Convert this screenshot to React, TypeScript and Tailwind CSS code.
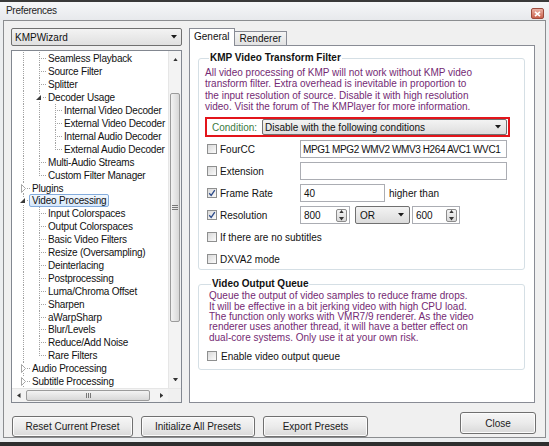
import React from "react";

const tree: { t: string; c: string; sel?: boolean }[] = [
  { t: "Seamless Playback", c: "IT" },
  { t: "Source Filter", c: "IT" },
  { t: "Splitter", c: "IT" },
  { t: "Decoder Usage", c: "IE" },
  { t: "Internal Video Decoder", c: "IIT" },
  { t: "External Video Decoder", c: "IIT" },
  { t: "Internal Audio Decoder", c: "IIT" },
  { t: "External Audio Decoder", c: "IIL" },
  { t: "Multi-Audio Streams", c: "IT" },
  { t: "Custom Filter Manager", c: "IL" },
  { t: "Plugins", c: "C" },
  { t: "Video Processing", c: "E", sel: true },
  { t: "Input Colorspaces", c: "IT" },
  { t: "Output Colorspaces", c: "IT" },
  { t: "Basic Video Filters", c: "IT" },
  { t: "Resize (Oversampling)", c: "IT" },
  { t: "Deinterlacing", c: "IT" },
  { t: "Postprocessing", c: "IT" },
  { t: "Luma/Chroma Offset", c: "IT" },
  { t: "Sharpen", c: "IT" },
  { t: "aWarpSharp", c: "IT" },
  { t: "Blur/Levels", c: "IT" },
  { t: "Reduce/Add Noise", c: "IT" },
  { t: "Rare Filters", c: "IL" },
  { t: "Audio Processing", c: "C" },
  { t: "Subtitle Processing", c: "C" },
];

const dot = { stroke: "#a3a3a3", strokeWidth: 1, strokeDasharray: "1 1" };

function Cell({ k }: { k: string }) {
  return (
    <svg width="16" height="13" viewBox="0 0 16 13" className="shrink-0">
      {k === "I" && <line x1="8.5" y1="0" x2="8.5" y2="13" {...dot} />}
      {k === "T" && (
        <>
          <line x1="8.5" y1="0" x2="8.5" y2="13" {...dot} />
          <line x1="10" y1="6.5" x2="16" y2="6.5" {...dot} />
        </>
      )}
      {k === "L" && (
        <>
          <line x1="8.5" y1="0" x2="8.5" y2="7" {...dot} />
          <line x1="10" y1="6.5" x2="16" y2="6.5" {...dot} />
        </>
      )}
      {k === "E" && (
        <>
          <line x1="8.5" y1="0" x2="8.5" y2="3" {...dot} />
          <line x1="8.5" y1="11" x2="8.5" y2="13" {...dot} />
          <polygon points="10,4 10,9 5,9" fill="#3a3a3a" />
          <line x1="12" y1="6.5" x2="16" y2="6.5" {...dot} />
        </>
      )}
      {k === "C" && (
        <>
          <line x1="8.5" y1="0" x2="8.5" y2="2" {...dot} />
          <line x1="8.5" y1="11" x2="8.5" y2="13" {...dot} />
          <polygon points="6.5,2.5 10.5,6.5 6.5,10.5" fill="#fff" stroke="#a6a6a6" strokeWidth="1" />
          <line x1="12" y1="6.5" x2="16" y2="6.5" {...dot} />
        </>
      )}
    </svg>
  );
}

function Tri({ dir, size = 7, color = "#1a1a1a" }: { dir: "up" | "down" | "left" | "right"; size?: number; color?: string }) {
  const h = Math.ceil(size / 2) + 0.5;
  const pts =
    dir === "down"
      ? `0,0 ${size},0 ${size / 2},${h}`
      : dir === "up"
      ? `0,${h} ${size},${h} ${size / 2},0`
      : dir === "left"
      ? `${h},0 ${h},${size} 0,${size / 2}`
      : `0,0 0,${size} ${h},${size / 2}`;
  const w = dir === "up" || dir === "down" ? size : h;
  const hh = dir === "up" || dir === "down" ? h : size;
  return (
    <svg width={w} height={hh} viewBox={`0 0 ${w} ${hh}`} className="shrink-0">
      <polygon points={pts} fill={color} />
    </svg>
  );
}

function Check({ on }: { on?: boolean }) {
  return (
    <span className="w-[10px] h-[10px] shrink-0 border border-[#8e8f8f] bg-gradient-to-br from-[#d9d9d9] to-[#fbfbfb] flex items-center justify-center">
      {on && (
        <svg width="8" height="8" viewBox="0 0 8 8">
          <path d="M1.2 4.2 L3.2 6.4 L6.8 1.2" fill="none" stroke="#2c4a8a" strokeWidth="1.3" />
        </svg>
      )}
    </span>
  );
}

function Spin() {
  return (
    <span className="w-[11px] h-[13px] shrink-0 border border-[#8c8c8c] rounded-[2px] bg-gradient-to-b from-[#f4f4f4] to-[#d8d8d8] flex flex-col items-center justify-center gap-[2px]">
      <Tri dir="up" size={5} color="#333" />
      <span className="w-[7px] h-px bg-[#8c8c8c]" />
      <Tri dir="down" size={5} color="#333" />
    </span>
  );
}

function Btn({ w, children, extra = "" }: { w: string; children: React.ReactNode; extra?: string }) {
  return (
    <div
      className={`${w} ${extra} h-[21px] border border-[#707070] rounded-[3px] bg-gradient-to-b from-[#f6f6f6] via-[#ebebeb] to-[#d9d9d9] flex items-center justify-center text-[10px] text-[#1a1a1a] shadow-[inset_0_0_0_1px_#fcfcfc]`}
    >
      {children}
    </div>
  );
}

export default function App() {
  return (
    <div className="w-[549px] h-[446px] overflow-hidden bg-[#eceef0] border-t-2 border-[#3a3a3a] flex flex-col font-['Liberation_Sans',Arial,sans-serif] text-[10px] text-[#111]">
      {/* title bar */}
      <div className="h-[18px] shrink-0 flex items-start justify-between pl-[6px] pr-[5px] bg-gradient-to-b from-[#f6f7f9] to-[#e7e9ec]">
        <span className="text-[10px] leading-[18px] tracking-[-0.3px] text-[#1e1e1e]">Preferences</span>
        <span className="mt-[6px] w-[13px] h-[11px] rounded-[2px] border border-[#9c4a3c] bg-gradient-to-b from-[#eab2a6] to-[#c9604c] flex items-center justify-center">
          <svg width="7" height="6" viewBox="0 0 7 6">
            <path d="M1 0.8 L6 5.2 M6 0.8 L1 5.2" stroke="#fff" strokeWidth="1.6" />
          </svg>
        </span>
      </div>

      {/* frame */}
      <div className="mx-[3px] h-[418px] shrink-0 border border-[#8b8d90] bg-[#f0f0f0] flex flex-col pl-[7px] pr-[9px] pt-[7px]">
        <div className="flex h-[375px]">
          {/* left column */}
          <div className="w-[171px] flex flex-col gap-[4px]">
            <div className="h-[18px] border border-[#707070] rounded-[2px] bg-gradient-to-b from-[#f3f3f3] to-[#e0e0e0] flex items-center justify-between pl-[3px] pr-[4px]">
              <span>KMPWizard</span>
              <Tri dir="down" size={6} />
            </div>
            <div className="h-[353px] border border-[#828790] bg-white flex flex-col">
              <div className="flex h-[337px]">
                <div className="flex-1 overflow-hidden pt-[1.5px] pl-[3px] tracking-[-0.2px]">
                  {tree.map((r, i) => (
                    <div key={i} className="h-[12.92px] flex items-center whitespace-nowrap">
                      {r.c.split("").map((k, j) => (
                        <Cell key={j} k={k} />
                      ))}
                      {r.sel ? (
                        <span className="ml-[-2px] px-[2px] h-[13px] leading-[11px] border border-[#84acdd] rounded-[2px] bg-gradient-to-b from-[#f2f8fe] to-[#d5e7fb]">
                          {r.t}
                        </span>
                      ) : (
                        <span className="ml-[1px]">{r.t}</span>
                      )}
                    </div>
                  ))}
                </div>
                {/* vertical scrollbar */}
                <div className="w-[13px] bg-[#f3f3f3] border-l border-[#e6e6e6] flex flex-col">
                  <div className="h-[17px] flex items-center justify-center">
                    <Tri dir="up" size={5} color="#333" />
                  </div>
                  <div className="flex-1 pt-[25px]">
                    <div className="h-[229px] mx-px border border-[#9b9b9b] rounded-[2px] bg-gradient-to-r from-[#f3f3f3] to-[#d8d8d8] flex flex-col items-center justify-center gap-[1px]">
                      <span className="w-[6px] h-px bg-[#777]" />
                      <span className="w-[6px] h-px bg-[#777]" />
                      <span className="w-[6px] h-px bg-[#777]" />
                    </div>
                  </div>
                  <div className="h-[17px] flex items-center justify-center">
                    <Tri dir="down" size={5} color="#333" />
                  </div>
                </div>
              </div>
              {/* horizontal scrollbar */}
              <div className="h-[14px] flex bg-[#f3f3f3] border-t border-[#e6e6e6]">
                <div className="w-[14px] flex items-center justify-center">
                  <Tri dir="left" size={5} color="#333" />
                </div>
                <div className="w-[124px] my-px border border-[#9b9b9b] rounded-[2px] bg-gradient-to-b from-[#f3f3f3] to-[#d8d8d8] flex items-center justify-center gap-[1px]">
                  <span className="w-px h-[5px] bg-[#777]" />
                  <span className="w-px h-[5px] bg-[#777]" />
                  <span className="w-px h-[5px] bg-[#777]" />
                </div>
                <div className="flex-1 flex items-center justify-end pr-[5px]">
                  <Tri dir="right" size={5} color="#333" />
                </div>
                <div className="w-[13px] bg-[#f0f0f0]" />
              </div>
            </div>
          </div>

          {/* right column */}
          <div className="ml-[7px] w-[346px] flex flex-col">
            <div className="h-[17px] flex items-end">
              <div className="relative z-10 -mb-px h-[18px] border border-b-0 border-[#898c95] bg-white px-[4px] leading-[16px]">
                General
              </div>
              <div className="ml-[-1px] h-[14px] border border-b-0 border-[#898c95] bg-gradient-to-b from-[#f4f4f4] to-[#e2e2e2] px-[5px] leading-[13px]">
                Renderer
              </div>
            </div>
            <div className="h-[358px] border border-[#898c95] bg-white pl-[8px] pt-[6px]">
              {/* group 1 */}
              <fieldset className="w-[327px] border border-[#d5dfe5] rounded-[3px] pl-[6px] pb-[1px]">
                <legend className="ml-[4px] px-[1px] font-bold leading-[12px] text-[#111]">KMP Video Transform Filter</legend>
                <div className="mt-[3px] leading-[11.3px] text-[#742a73] whitespace-nowrap">
                  <div>All video processing of KMP will not work without KMP video</div>
                  <div>transform filter. Extra overhead is inevitable in proportion to</div>
                  <div>the input resolution of source. Disable it with high resolution</div>
                  <div>video. Visit the forum of The KMPlayer for more information.</div>
                </div>
                <div className="mt-[5px] w-[305px] h-[20px] border-2 border-[#e3151b] flex items-center pl-[5px] pr-[1px]">
                  <span className="w-[50px] text-[#3b7a40]">Condition:</span>
                  <div className="flex-1 h-[16px] border border-[#707070] rounded-[2px] bg-gradient-to-b from-[#f3f3f3] to-[#dedede] flex items-center justify-between pl-[2px] pr-[5px]">
                    <span>Disable with the following conditions</span>
                    <Tri dir="down" size={6} />
                  </div>
                </div>
                <div className="mt-[3px] ml-[2px] flex flex-col gap-[4px]">
                  <div className="h-[18px] flex items-center">
                    <div className="w-[93px] flex items-center gap-[3px]">
                      <Check />
                      <span>FourCC</span>
                    </div>
                    <div className="w-[207px] h-[18px] border border-[#abadb3] bg-white flex items-center pl-[2px] whitespace-nowrap overflow-hidden tracking-[-0.4px]">
                      MPG1 MPG2 WMV2 WMV3 H264 AVC1 WVC1
                    </div>
                  </div>
                  <div className="h-[18px] flex items-center">
                    <div className="w-[93px] flex items-center gap-[3px]">
                      <Check />
                      <span>Extension</span>
                    </div>
                    <div className="w-[207px] h-[18px] border border-[#abadb3] bg-white" />
                  </div>
                  <div className="h-[18px] flex items-center">
                    <div className="w-[93px] flex items-center gap-[3px]">
                      <Check on />
                      <span>Frame Rate</span>
                    </div>
                    <div className="w-[85px] h-[18px] border border-[#abadb3] bg-white flex items-center pl-[3px]">40</div>
                    <span className="ml-[4px]">higher than</span>
                  </div>
                  <div className="h-[18px] flex items-center">
                    <div className="w-[93px] flex items-center gap-[3px]">
                      <Check on />
                      <span>Resolution</span>
                    </div>
                    <div className="w-[50px] h-[18px] border border-[#abadb3] bg-white flex items-center justify-between pl-[3px] pr-[2px]">
                      <span>800</span>
                      <Spin />
                    </div>
                    <div className="ml-[5px] w-[55px] h-[18px] border border-[#707070] rounded-[2px] bg-gradient-to-b from-[#f3f3f3] to-[#dcdcdc] flex items-center justify-between pl-[4px] pr-[5px]">
                      <span>OR</span>
                      <Tri dir="down" size={6} />
                    </div>
                    <div className="ml-[2px] w-[48px] h-[18px] border border-[#abadb3] bg-white flex items-center justify-between pl-[3px] pr-[2px]">
                      <span>600</span>
                      <Spin />
                    </div>
                  </div>
                  <div className="h-[18px] flex items-center gap-[3px]">
                    <Check />
                    <span>If there are no subtitles</span>
                  </div>
                  <div className="h-[18px] flex items-center gap-[3px]">
                    <Check />
                    <span>DXVA2 mode</span>
                  </div>
                </div>
              </fieldset>

              {/* group 2 */}
              <fieldset className="mt-[8px] w-[327px] border border-[#d5dfe5] rounded-[3px] pl-[8px] pb-[7px]">
                <legend className="ml-[4px] px-[1px] font-bold leading-[12px] text-[#111]">Video Output Queue</legend>
                <div className="mt-[1px] ml-[2px] leading-[10.4px] text-[#742a73] whitespace-nowrap">
                  <div>Queue the output of video samples to reduce frame drops.</div>
                  <div>It will be effective in a bit jerking video with high CPU load.</div>
                  <div>The function only works with VMR7/9 renderer. As the video</div>
                  <div>renderer uses another thread, it will have a better effect on</div>
                  <div>dual-core systems. Only use it at your own risk.</div>
                </div>
                <div className="mt-[7px] h-[12px] flex items-center gap-[4px]">
                  <Check />
                  <span>Enable video output queue</span>
                </div>
              </fieldset>
            </div>
          </div>
        </div>

        {/* buttons */}
        <div className="mt-[9px] flex items-end">
          <Btn w="w-[121px]" extra="ml-[1px]">Reset Current Preset</Btn>
          <Btn w="w-[114px]" extra="ml-[8px]">Initialize All Presets</Btn>
          <Btn w="w-[105px]" extra="ml-[8px]">Export Presets</Btn>
          <Btn w="w-[76px]" extra="ml-auto mb-[3px] h-[22px]">Close</Btn>
        </div>
      </div>

      <div className="h-[4px] shrink-0" />
      <div className="flex-1 bg-[#2e2e2e]" />
    </div>
  );
}
